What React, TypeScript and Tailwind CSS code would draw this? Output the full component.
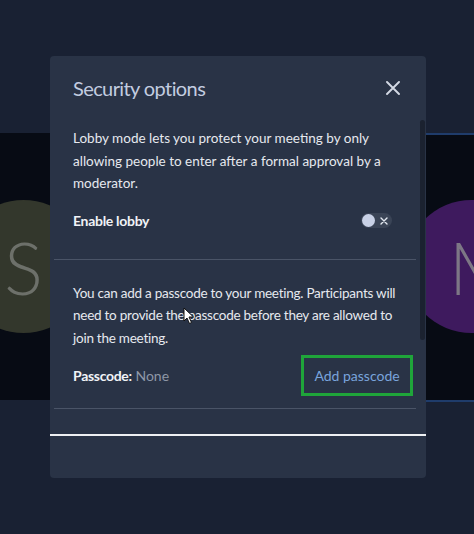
import React from "react";

function Toggle() {
  return (
    <div className="relative flex h-[15px] w-[31px] items-center rounded-full bg-[#3a4456]">
      <div className="ml-[1px] h-[13px] w-[13px] rounded-full bg-[#c8d1e6]" />
      <svg className="ml-[5px]" width="8" height="8" viewBox="0 0 8 8">
        <path d="M1 1 L7 7 M7 1 L1 7" stroke="#e3e8f0" strokeWidth="1.4" strokeLinecap="round" />
      </svg>
    </div>
  );
}

export default function App() {
  return (
    <div
      className="relative h-[534px] w-[474px] overflow-hidden bg-[#192133]"
      style={{ fontFamily: "Lato, 'Noto Sans', sans-serif" }}
    >
      <div className="flex h-full flex-col">
        <div className="h-[133px] bg-[#192133]" />
        <div className="relative h-[267px] bg-[#070b14]">
          <div className="absolute right-0 top-0 h-[2px] w-[60px] bg-[#1f3c6b]" />
          <div className="absolute left-[-43px] top-[67px] flex h-[133px] w-[133px] items-center justify-center rounded-full bg-[#33372c]">
            <span className="text-[72px] font-light leading-none text-[#6d706a]">S</span>
          </div>
          <div className="absolute left-[405px] top-[67px] flex h-[133px] w-[133px] items-center rounded-full bg-[#3e1a5e]">
            <span className="ml-[44px] text-[72px] font-light leading-none text-[#7d7785]">M</span>
          </div>
        </div>
        <div className="relative flex-1 bg-[#192133]">
          <div className="absolute right-0 top-0 h-[2px] w-[60px] bg-[#1f3c6b]" />
        </div>
      </div>

      <div className="absolute left-[50px] top-[56px] flex h-[422px] w-[376px] flex-col rounded-[4px] bg-[#293346]">
        <div className="flex h-[64px] items-center justify-between pl-[23px] pr-[26px]">
          <h2 className="text-[20px] leading-none tracking-[-0.6px] text-[#c3cde0]">Security options</h2>
          <svg width="14" height="14" viewBox="0 0 14 14">
            <path d="M1 1 L13 13 M13 1 L1 13" stroke="#d3d9e4" strokeWidth="1.9" strokeLinecap="round" />
          </svg>
        </div>

        <div className="relative flex h-[314px] flex-col">
          <div className="absolute right-[1px] top-0 h-[220px] w-[5px] rounded-full bg-[#1b2230]" />
          <div className="pl-[23px] pr-[12px] pt-[7px]">
            <p className="whitespace-nowrap text-[13.5px] leading-[22.5px] text-[#e6e9ef]">
              Lobby mode lets you protect your meeting by only
              <br />
              allowing people to enter after a formal approval by a
              <br />
              moderator.
            </p>
            <div className="mt-[15px] flex items-center justify-between pr-[22px]">
              <span className="text-[14px] font-bold leading-[22px] tracking-[-0.3px] text-[#f1f3f7]">Enable lobby</span>
              <Toggle />
            </div>
          </div>
          <div className="mx-[4px] mt-[27px] h-[1px] w-[362px] bg-[#4a5467]" />
          <div className="pl-[23px] pr-[20px] pt-[22px]">
            <p className="whitespace-nowrap text-[13.5px] leading-[22.5px] tracking-[-0.25px] text-[#e6e9ef]">
              You can add a passcode to your meeting. Participants will
              <br />
              need to provide the passcode before they are allowed to
              <br />
              join the meeting.
            </p>
            <div className="mt-[6px] flex items-center justify-between">
              <span className="text-[14px] leading-[22px]">
                <span className="font-bold tracking-[-0.3px] text-[#f1f3f7]">Passcode:</span>{" "}
                <span className="text-[#8e97a6]">None</span>
              </span>
              <button className="mr-[-7px] flex h-[41px] w-[112px] items-center justify-center border-[3px] border-[#1fa53a] text-[14px] text-[#79a4dc]">
                Add passcode
              </button>
            </div>
          </div>
          <div className="mx-[4px] mt-[12px] h-[1px] w-[362px] bg-[#4a5467]" />
        </div>

        <div className="h-[2px] w-full bg-[#eef0f3]" />
      </div>

      <svg className="absolute left-[183px] top-[307px]" width="12" height="18" viewBox="0 0 12 18">
        <path d="M1 1 L1 14 L4 11 L6.5 16.5 L8.5 15.5 L6 10 L10.5 10 Z" fill="#ffffff" stroke="#111" strokeWidth="1" strokeLinejoin="round" />
      </svg>
    </div>
  );
}
